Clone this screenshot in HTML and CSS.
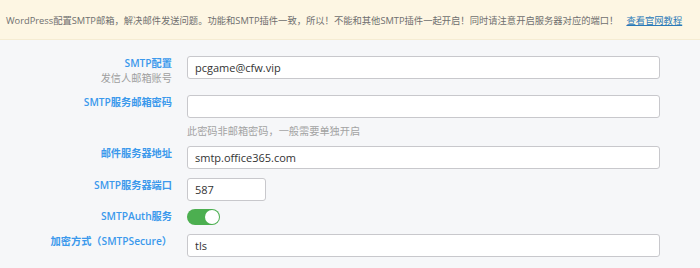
FILE: index.html
```html
<!DOCTYPE html>
<html lang="zh-CN">
<head>
<meta charset="utf-8">
<title>SMTP配置</title>
<link rel="stylesheet" href="styles.css">
</head>
<body>
<div class="notice">
  <span class="notice-text">WordPress配置SMTP邮箱，解决邮件发送问题。功能和SMTP插件一致，所以！不能和其他SMTP插件一起开启！同时请注意开启服务器对应的端口！</span>
  <a class="notice-link" href="#">查看官网教程</a>
</div>
<form class="form">
  <div class="row">
    <div class="label">SMTP配置<span class="sub">发信人邮箱账号</span></div>
    <div class="field"><input class="input" type="text" value="pcgame@cfw.vip"></div>
  </div>
  <div class="row">
    <div class="label">SMTP服务邮箱密码</div>
    <div class="field"><input class="input" type="text" value=""><div class="hint">此密码非邮箱密码，一般需要单独开启</div></div>
  </div>
  <div class="row">
    <div class="label">邮件服务器地址</div>
    <div class="field"><input class="input" type="text" value="smtp.office365.com"></div>
  </div>
  <div class="row">
    <div class="label">SMTP服务器端口</div>
    <div class="field"><input class="input input-short" type="text" value="587"></div>
  </div>
  <div class="row">
    <div class="label">SMTPAuth服务</div>
    <div class="field"><span class="switch"><span class="knob"></span></span></div>
  </div>
  <div class="row">
    <div class="label">加密方式（SMTPSecure）</div>
    <div class="field"><input class="input" type="text" value="tls"></div>
  </div>
</form>
</body>
</html>
```

FILE: styles.css
```css
html, body {
  margin: 0;
  padding: 0;
  background: #f6f7f9;
  font-family: "Open Sans", "Noto Sans CJK SC", sans-serif;
}
.notice {
  height: 40px;
  box-sizing: border-box;
  background: #fdf6e3;
  border-bottom: 1px solid #f5ecd2;
  display: flex;
  align-items: center;
  padding-left: 6px;
  font-size: 9.3px;
  color: #6f6f6f;
  white-space: nowrap;
}
.notice-link {
  margin-left: 8px;
  color: #2a79b8;
  text-decoration: underline;
}
.form {
  margin-top: 16px;
  display: flex;
  flex-direction: column;
  gap: 8.5px;
}
.row {
  display: grid;
  grid-template-columns: 172px 473px;
  column-gap: 15px;
  align-items: start;
}
.label {
  text-align: right;
  font-size: 10.2px;
  line-height: 15px;
  font-weight: 600;
  color: #3b99ec;
  white-space: nowrap;
}
.sub {
  display: block;
  font-weight: 400;
  color: #9f9f9f;
  line-height: 15px;
}
.field {
  display: flex;
  flex-direction: column;
  align-items: flex-start;
}
.input {
  box-sizing: border-box;
  width: 473px;
  height: 23px;
  margin: 0;
  padding: 0 7px;
  border: 1px solid #c8c8cc;
  border-radius: 3px;
  background: #fff;
  font-family: "Open Sans", "Noto Sans CJK SC", sans-serif;
  font-size: 11px;
  color: #333;
  outline: none;
}
.input-short {
  width: 79px;
}
.hint {
  margin-top: 6px;
  font-size: 10.2px;
  line-height: 14px;
  color: #a3a3a3;
}
.switch {
  display: flex;
  justify-content: flex-end;
  align-items: center;
  width: 33px;
  height: 16px;
  box-sizing: border-box;
  padding-right: 1px;
  border-radius: 8px;
  background: #4caf50;
}
.knob {
  width: 14px;
  height: 14px;
  border-radius: 50%;
  background: #fff;
}
```
